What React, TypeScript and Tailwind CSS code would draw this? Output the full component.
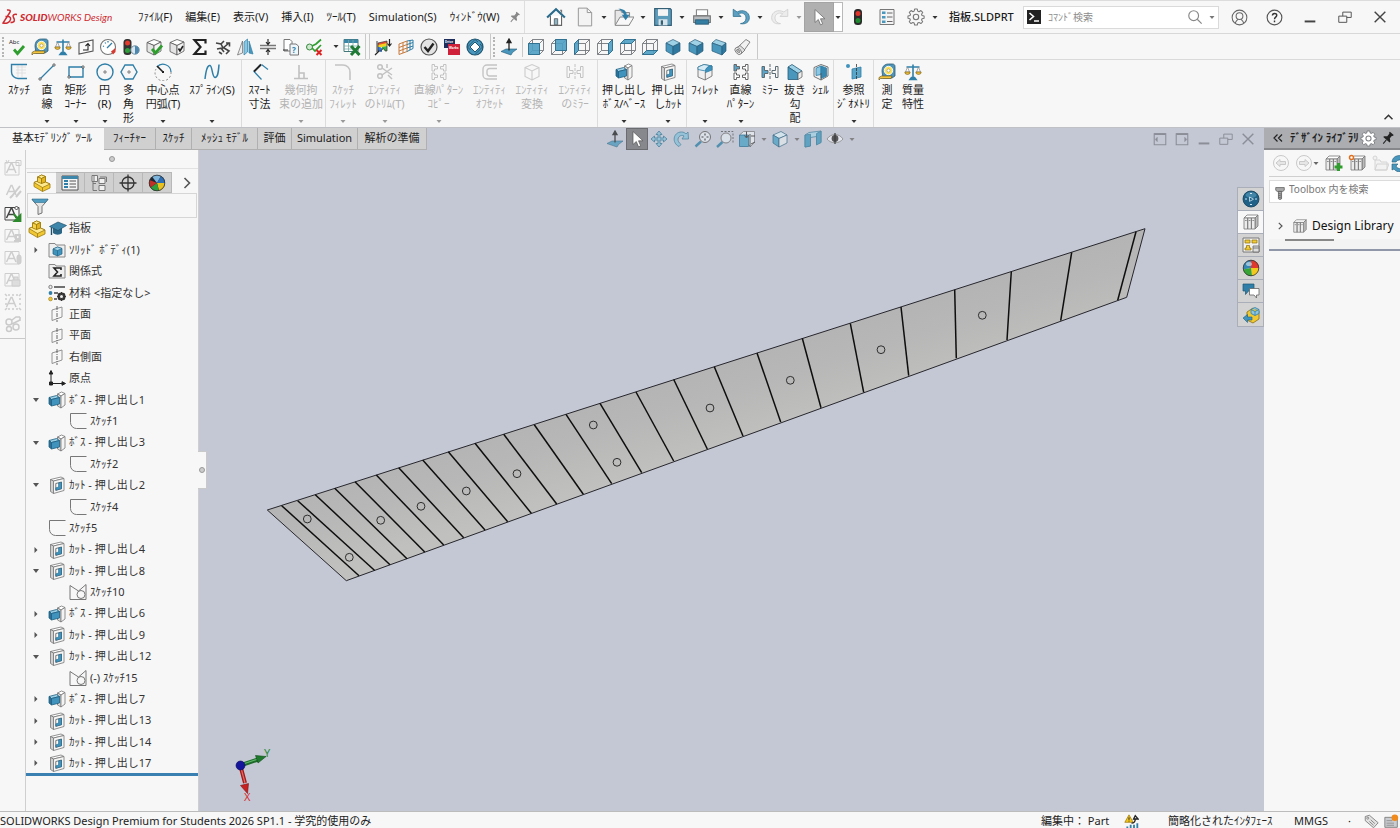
import React from "react";

type IconName = string;

const B = "#2f7fa8";
const K = "#3d3d3d";
const G = "#8a8a8a";

/* Wireframe cube with one face filled, used by the standard view buttons. */
const wireFaces: Record<string, string> = {
  front: "M1.500 5.500h11v11h-11z",
  back: "M5.500 1.500h11v11h-11z",
  left: "M1.500 5.500l4-4v11l-4 4z",
  right: "M12.500 5.500l4-4v11l-4 4z",
  top: "M1.500 5.500l4-4h11l-4 4z",
  bottom: "M1.500 16.500l4-4h11l-4 4z",
};

const Wire = ({ face }: { face: string }) => (
  <>
    <path
      d="M1.500 5.500h11v11h-11zM5.500 1.500h11v11h-11zM1.500 5.500l4-4M12.500 5.500l4-4M12.500 16.500l4-4M1.500 16.500l4-4"
      fill="none"
      stroke="#73777c"
      strokeWidth=".9"
    />
    <path d={wireFaces[face]} fill="#4f9fc4" fillOpacity=".9" stroke="#2a6d90" strokeWidth=".9" />
  </>
);

const Cube = ({ mx = 9, c = ["#9ed0e6", "#4a97bd", "#2f789f"] }: { mx?: number; c?: string[] }) => (
  <g stroke="#2a5d7a" strokeWidth=".7" strokeLinejoin="round">
    <path d={`M2 5L${18 - mx} 1.5L16 5L${mx} 8.5z`} fill={c[0]} />
    <path d={`M2 5L${mx} 8.5V17L2 13z`} fill={c[1]} />
    <path d={`M16 5L${mx} 8.5V17L16 13z`} fill={c[2]} />
  </g>
);

const GreyBox = () => (
  <g stroke="#555" strokeWidth=".8" strokeLinejoin="round">
    <path d="M2 4.500L9 1.500L16 4L9 7.500z" fill="#fff" />
    <path d="M2 4.500L9 7.500V17L2 13.500z" fill="#e4e4e4" />
    <path d="M16 4L9 7.500V17L16 13z" fill="#f4f4f4" />
  </g>
);

const Boss = () => (
  <g strokeLinejoin="round" strokeWidth=".8">
    <path d="M9.500 3L13.500 1l3.500 1.500-4 2.500z" fill="#fff" stroke="#777" />
    <path d="M9.500 3L13 5v12l-3.500-2z" fill="#dcdcdc" stroke="#777" />
    <path d="M13 5l4-2.500v11.500L13 17z" fill="#f3f3f3" stroke="#777" />
    <path d="M1 6.500L8.500 4.500 11.500 6.500 3.500 8.500z" fill="#9bd0e7" stroke="#1f5f80" />
    <path d="M1 6.500l2.500 2V15L1 13z" fill="#2c7298" stroke="#1f5f80" />
    <path d="M3.500 8.500l8-2V13l-8 2z" fill="#3f93bd" stroke="#1f5f80" />
  </g>
);

const Cut = () => (
  <g strokeLinejoin="round" strokeWidth=".8" stroke="#777">
    <path d="M2.500 3.500L13 1l3 1.500L5.500 5z" fill="#fff" />
    <path d="M2.500 3.500l3 1.500v12.500l-3-2z" fill="#d0d0d0" />
    <path d="M5.500 5L16 2.500v12L5.500 17.500z" fill="#f5f5f5" />
    <path d="M7.800 7.500l5.700-1.400v6.600l-5.700 1.600z" fill="#fff" stroke="#555" />
    <path d="M10.500 6.900l3-.8v6.600l-5.700 1.600v-2.500l2.700-.8z" fill="#3f93bd" stroke="#1f5f80" strokeWidth=".5" />
  </g>
);

const Books = ({ x = 0 }: { x?: number }) => (
  <g stroke="#777" strokeWidth=".8" strokeLinejoin="round" transform={`translate(${x} 0)`}>
    <path d="M2 5l3-3h11l-3 3z" fill="#fff" />
    <path d="M13 5l3-3v11l-3 3z" fill="#bbb" />
    <path d="M2 5h3.700v11H2zM5.700 5h3.700v11H5.700zM9.400 5H13v11H9.400z" fill="#ececec" />
    <path d="M3 7.500h1.700M6.700 7.500h1.700M10.400 7.500h1.700" />
  </g>
);

const Tape = () => (
  <g>
    <path d="M4 8.500C4 4 6 1 10.500 1h4c1.500 0 2.500 1 2.500 2.500V13L14 15H5z" fill="#4f93b6" stroke="#2b5e7a" strokeWidth=".8" />
    <circle cx="10.500" cy="7.500" r="4.200" fill="#ffe25a" stroke="#fff" strokeWidth=".9" />
    <circle cx="10.500" cy="7.500" r="1.600" fill="#fff" stroke="#777" strokeWidth=".5" />
    <path d="M14 13H3.500L1 14.500V17l1.500-1.500H13z" fill="#f4c63f" stroke="#6b5a20" strokeWidth=".7" />
  </g>
);

const Scales = () => (
  <g>
    <path d="M9 1.500v13M2.500 4h13M6 16.500h6l-1.500-2h-3z" stroke={B} strokeWidth="1.600" fill={B} />
    <path d="M3.500 4L1.500 9h4zM14.500 4l-2 5h4z" fill="none" stroke={G} strokeWidth=".7" />
    <path d="M.8 9h5.400a2.700 2.500 0 0 1-5.400 0zM11.800 9h5.400a2.700 2.500 0 0 1-5.400 0z" fill="#e6b93a" stroke="#7a5f12" strokeWidth=".6" />
  </g>
);

const Gear = ({ c = "#777", f = "none" }: { c?: string; f?: string }) => (
  <g fill={f} stroke={c} strokeWidth="1.100" strokeLinejoin="round">
    <path d="M7.600 1.500h2.800l.5 2.200 1.300.6 2-1.200 1.900 2-1.200 1.900.5 1.300 2.200.5v2.300l-2.200.6-.5 1.300 1.200 1.900-1.900 1.900-2-1.200-1.300.6-.5 2.200H7.600l-.5-2.200-1.300-.6-2 1.200-1.900-1.900 1.200-1.900-.5-1.300L.6 11.100V8.800l2.200-.5.500-1.300-1.300-1.900 1.900-2 2 1.200 1.200-.6z" transform="translate(.4 -.4) scale(.95)" />
    <circle cx="9" cy="9" r="2.700" />
  </g>
);

const Ball = () => (
  <g>
    <path d="M9 9V1A8 8 0 0 0 1.200 10.500z" fill="#3787b5" />
    <path d="M9 9V1a8 8 0 0 1 8 8z" fill="#e03a2e" />
    <path d="M9 9l8 0a8 8 0 0 1-7 8z" fill="#f3c91d" />
    <path d="M9 9L1.200 10.500A8 8 0 0 0 10 17z" fill="#36a536" />
    <circle cx="9" cy="9" r="7.800" fill="none" stroke="#333" strokeWidth=".8" />
    <ellipse cx="7" cy="5" rx="3" ry="2" fill="#fff" opacity=".5" />
  </g>
);

const DarkBall = () => (
  <g>
    <circle cx="9" cy="9" r="8" fill="#1d2733" />
    <path d="M9 9L4 2.500A8 8 0 0 1 13 2z" fill="#7db4dc" />
    <path d="M9 9l4-7a8 8 0 0 1 4 7z" fill="#2e6fb5" />
    <path d="M9 9h8a8 8 0 0 1-6 7.700z" fill="#e8c020" />
    <path d="M9 9l-6.500 4.500A8 8 0 0 0 11 16.700z" fill="#2f9e3c" />
    <path d="M9 9L2.500 13.500A8 8 0 0 1 1.500 6z" fill="#c03028" />
    <circle cx="9" cy="9" r="7.800" fill="none" stroke="#333" strokeWidth=".8" />
  </g>
);

const Anno = ({ children, c = "#cdcdcd", box = true }: { children?: React.ReactNode; c?: string; box?: boolean }) => (
  <g fill="none" stroke={c} strokeWidth="1">
    {box && <path d="M1 3.500h14v12.500H1z" />}
    <path d="M2.500 14L7 4.500h1L12 14M4.500 10.500h6" strokeWidth="1.500" />
    {children}
  </g>
);

const Pattern = ({ c, f = "none" }: { c: string; f?: string }) => (
  <g fill={f} stroke={c} strokeWidth="1">
    <path d="M2 1.500h2.500v2h3v2.500h-3v2H2z" fill={f === "none" ? "none" : "#5aa5c8"} />
    <path d="M16 1.500h-2.500v2h-3v2.500h3v2H16zM2 10h2.500v2h3v2.500h-3v2H2zM16 10h-2.500v2h-3v2.500h3v2H16z" />
  </g>
);

const MirrorIcon = ({ c, f = "none" }: { c: string; f?: string }) => (
  <g fill="none" stroke={c} strokeWidth="1">
    <path d="M1 3.500h2.500v4H7v3H3.500v4H1z" fill={f} />
    <path d="M17 3.500h-2.500v4H11v3h3.500v4H17z" />
    <path d="M9 1v16" strokeDasharray="3 1" />
  </g>
);

const Sigma = () => <path d="M14.500 5.500V2H3.500L9.500 9l-6 7h11v-3.500" fill="none" stroke="#222" strokeWidth="2.200" />;

const NormalTo = () => (
  <g>
    <path d="M1 13.500l5-2.500h11l-4.500 3.500L11 17z" fill="#4a97bd" stroke="#235b78" strokeWidth=".6" />
    <path d="M9 12.500V3M9 1L7 4.500h4z" stroke="#222" strokeWidth="1.300" fill="#222" />
  </g>
);

const icons: Record<IconName, React.ReactNode> = {
  check: (
    <>
      <text x="1" y="6" fontSize="6" fill="#222">Abc</text>
      <path d="M6 11.500l3.500 4L16 8" fill="none" stroke="#2f9e2f" strokeWidth="2.800" />
    </>
  ),
  tape: <Tape />,
  scales: <Scales />,
  section: (
    <g fill="none" stroke="#555" strokeWidth="1.100">
      <path d="M2 5l14-3v11L2 16z" fill="#fafafa" />
      <path d="M6 12h5V6M8.500 8L11 5.500 13 8" stroke="#222" />
    </g>
  ),
  gauge: (
    <>
      <circle cx="9" cy="9" r="7.500" fill="#fff" stroke="#777" strokeWidth="1.100" />
      <path d="M4 8l1 .5M6 4.500l.7 1M9 3v1.500M13 5l-5 5" stroke={B} strokeWidth="1.300" />
      <path d="M12 13.500l4.500-3.500v4L14 16.500z" fill="#d43a2f" />
    </>
  ),
  lightPlus: (
    <>
      <rect x="1.500" y="1" width="8" height="16" rx="3.500" fill="#333" />
      <circle cx="5.500" cy="5" r="2.500" fill="#e53b2e" />
      <circle cx="5.500" cy="12.500" r="2.500" fill="#2e9e3a" />
      <circle cx="13" cy="12" r="4.200" fill="#d9e6ee" stroke="#6b8ca0" />
      <path d="M13 12V8a4 4 0 0 1 0 8z" fill="#4a86ad" />
    </>
  ),
  boxCheck: (
    <>
      <GreyBox />
      <path d="M7 11l3.500 4L17 7.500" fill="none" stroke="#2f9e2f" strokeWidth="2.800" />
    </>
  ),
  boxMark: (
    <>
      <GreyBox />
      <path d="M10.500 10.500l1.500 2.500 3-5" fill="none" stroke="#222" strokeWidth="1.600" />
    </>
  ),
  sigma: <Sigma />,
  explode: (
    <path d="M2 5l5 1 2 4 6-5M3 11l5-1M7 6l3-3M10 14l-3-4M10 10l5 3-3 3M12 5h3.500v3.500M5 14l3 2" fill="none" stroke="#444" strokeWidth="1.600" />
  ),
  mirrorPlane: (
    <g strokeWidth=".7">
      <path d="M6.500 3v12L1.500 17z" fill="#eee" stroke="#666" />
      <path d="M8 4l3.500-3v13L8 17z" fill="#8cc6e0" stroke={B} />
      <path d="M13 3v12l4 1z" fill="#4a97bd" stroke={B} />
    </g>
  ),
  thickness: (
    <>
      <path d="M1 7.500h16M1 10.500h16" stroke="#777" strokeWidth="1.300" />
      <path d="M9 1v5M9 17v-5M7 4L9 6.500 11 4M7 14l2-2.500 2 2.500" stroke="#222" strokeWidth="1.100" fill="none" />
    </>
  ),
  compare: (
    <>
      <path d="M2 1.500h6l2 2V13H2z" fill="#fff" stroke="#777" />
      <path d="M8 6h6l2.500 2v9H8z" fill="#eef6fa" stroke="#777" />
      <text x="10" y="15" fontSize="8" fontWeight="700" fill={B}>?</text>
      <path d="M1 12h5" stroke="#333" />
    </>
  ),
  symCheck: (
    <>
      <circle cx="4.500" cy="9" r="3" fill="#cfe8cf" stroke="#338a3b" />
      <path d="M7 8l4-2 5-4.500M7 10l3 3 6-6" stroke="#2f9e2f" strokeWidth="1.700" fill="none" />
      <path d="M11.500 12l5 5M16.500 12l-5 5" stroke="#d22" strokeWidth="2" />
    </>
  ),
  excel: (
    <>
      <path d="M1 1.500h14v12H1z" fill="#fff" stroke="#477" />
      <path d="M1 1.500h14V5H1z" fill="#3c87a8" />
      <path d="M1 8h14M1 11h14M5.500 2v11M10 2v11" stroke="#7aa" strokeWidth=".8" />
      <path d="M8 8l8.500 9M16.500 8L8 17" stroke="#1f7a35" strokeWidth="3" />
    </>
  ),
  fea: (
    <>
      <path d="M2 3h2v11H2z" fill="#999" />
      <path d="M4 5l9-2v3L4 8z" fill="#e8502e" />
      <path d="M4 7l9-2v3L4 10z" fill="#f2d21f" />
      <path d="M4 9c2 0 3 0 4 1.500V14l-4-1z" fill="#3578d4" />
      <path d="M8 9l5-1v5h-2l-1-2-2 1z" fill="#37b24d" />
      <path d="M4 5l9-2v10h-2c0-3-3-3-4 0H4z" fill="none" stroke="#333" strokeWidth=".7" />
      <path d="M15.500 1v7M13.500 5.500l2 2.500 2-2.500M5 13l-4 4" stroke="#222" strokeWidth="1.200" fill="none" />
    </>
  ),
  mesh: (
    <g fill="none" strokeWidth="1">
      <path d="M2 6l8-3M2 9.500l8-3M2 13l8-3M2 16.500l8-3M2 6v10.500M6 4.500V15M10 3v10.500" stroke="#c77a3a" />
      <path d="M10 3l6-1M10 6.500l6-2M10 10l6-2M10 13.500l6-3M13 2.500V12M16 2v8.500" stroke={B} />
    </g>
  ),
  tickRound: (
    <>
      <circle cx="9" cy="9" r="8" fill="#e3e3e3" stroke="#555" strokeWidth="1.200" />
      <path d="M4.500 9l3.500 4L13.500 5.500" fill="none" stroke="#222" strokeWidth="2.400" />
    </>
  ),
  drive: (
    <>
      <path d="M1 1h11v9H1z" fill="#1d2d5c" />
      <path d="M5 6h12v11H5z" fill="#d0213a" />
      <text x="2" y="5" fontSize="3" fontWeight="700" fill="#fff">Drive</text>
      <text x="6" y="11" fontSize="3" fontWeight="700" fill="#fff">Works</text>
    </>
  ),
  camworks: (
    <>
      <circle cx="9" cy="9" r="8" fill="#4a97bd" stroke="#1f5570" strokeWidth="1.200" />
      <path d="M9 4l5 5-5 5-5-5z" fill="#fff" stroke="#1f5570" strokeWidth="1" />
      <path d="M1.500 9L9 1.500M9 1.500L12 4M16.500 9L9 16.500M14 6l2.500 3M1.500 9l3 3" stroke="#1f5570" strokeWidth=".9" />
    </>
  ),
  normalTo: <NormalTo />,
  vFront: <Wire face="front" />,
  vBack: <Wire face="back" />,
  vLeft: <Wire face="left" />,
  vRight: <Wire face="right" />,
  vTop: <Wire face="top" />,
  vBottom: <Wire face="bottom" />,
  vIso: <Cube />,
  vTri: <Cube mx={10} />,
  vDi: <Cube mx={12} />,
  tube: (
    <g stroke="#777" strokeWidth=".9" strokeLinejoin="round">
      <path d="M6 8l7-6.500 4 2.500-6 8.500z" fill="#f1f1f1" />
      <path d="M3 10l4-2.500 5 4.500-4 4z" fill="#e0e0e0" />
      <ellipse cx="5.200" cy="13" rx="2.600" ry="4" transform="rotate(-40 5.200 13)" fill="#fff" />
      <ellipse cx="5.200" cy="13" rx="1.200" ry="2" transform="rotate(-40 5.200 13)" fill="#bbb" />
    </g>
  ),
  rSketch: (
    <>
      <path d="M6 4h10M6 7h10M6 10h10M8 2v12M12 2v12" stroke="#dcdcdc" strokeWidth=".8" />
      <path d="M17 1.500H1.500v7.500a6.500 6.500 0 0 0 6.500 6.500h9" fill="none" stroke={B} strokeWidth="1.400" />
    </>
  ),
  rLine: (
    <>
      <path d="M2 16L16 2" stroke={B} strokeWidth="1.300" />
      <path d="M1 15h2v2H1zM15 1h2v2h-2z" fill="#fff" stroke={K} strokeWidth=".7" />
    </>
  ),
  rRect: (
    <>
      <path d="M2 4h14v10H2z" fill="none" stroke={B} strokeWidth="1.400" />
      <path d="M1 13h2v2H1zM15 3h2v2h-2z" fill="#fff" stroke={K} strokeWidth=".7" />
    </>
  ),
  rCircle: (
    <>
      <circle cx="9" cy="9" r="8" fill="none" stroke={B} strokeWidth="1.400" />
      <path d="M8 8h2v2H8z" fill="#fff" stroke={K} strokeWidth=".6" />
    </>
  ),
  rPoly: (
    <>
      <path d="M5 2h8l4 7-4 7H5L1 9z" fill="none" stroke={B} strokeWidth="1.400" />
      <path d="M8 8h2v2H8z" fill="#fff" stroke={K} strokeWidth=".6" />
    </>
  ),
  rArc: (
    <>
      <path d="M3 4a8 8 0 0 1 14 5" fill="none" stroke={B} strokeWidth="1.300" />
      <path d="M17 9A8 8 0 1 1 2 6" fill="none" stroke="#888" strokeWidth="1" strokeDasharray="2 2" />
      <path d="M3 3l6 6" stroke="#222" strokeWidth="1.600" />
      <path d="M8 8h2v2H8z" fill="#222" />
    </>
  ),
  rSpline: <path d="M2 16C3 7 4.500 2 7 2.500s2 12 5 12 3.500-6 4-13" fill="none" stroke={B} strokeWidth="1.500" />,
  rSmart: (
    <>
      <path d="M9.500 2L3 8.500l7.500 8" fill="none" stroke={B} strokeWidth="1.200" />
      <path d="M10 1.500L3 8.500" stroke="#222" strokeWidth="1.900" />
      <path d="M10.500 1.500l6.500 5" stroke={B} strokeWidth="1.200" />
    </>
  ),
  rPerp: <path d="M2 15.500h14M7 2v13.500M7 10h5v5.500" fill="none" stroke="#c0c0c0" strokeWidth="1.600" />,
  rFilletS: <path d="M1 2h8a7 7 0 0 1 7 7v8" fill="none" stroke="#c4c4c4" strokeWidth="1.600" />,
  rTrim: (
    <g fill="none" stroke="#c2c2c2" strokeWidth="1.500">
      <circle cx="4" cy="4" r="2.300" />
      <circle cx="4" cy="13" r="2.300" />
      <path d="M6 5l10 7M6 12l10-7M11 1v4M12 12l4 4" />
    </g>
  ),
  rPatG: <Pattern c="#c2c2c2" />,
  rOffset: (
    <path d="M16 2H6a4 4 0 0 0-4 4v6a4 4 0 0 0 4 4h10M16 5.500H8.500A2.500 2.500 0 0 0 6 8v2.500A2.500 2.500 0 0 0 8.500 13H16" fill="none" stroke="#c4c4c4" strokeWidth="1.400" />
  ),
  rConvert: <path d="M2 4.500L9 1.500L16 4.500v9L9 17l-7-3.500zM2 4.500L9 8l7-3.500M9 8v9" fill="none" stroke="#cccccc" strokeWidth="1.100" />,
  rMirG: <MirrorIcon c="#c2c2c2" />,
  boss: <Boss />,
  cut: <Cut />,
  rFillet: (
    <g stroke="#666" strokeWidth=".8" strokeLinejoin="round">
      <path d="M2 4L8 1.500l8 1.500v10L9 17l-7-3z" fill="#f0f0f0" />
      <path d="M2 4L8 1.500l8 1.500c-4 0-6 2-6.500 5L2 6.500z" fill="#d8ebf4" stroke={B} />
      <path d="M9.500 8.500c0-3.500 2.500-5.500 6.500-5.500v4L9.500 9.500z" fill="#3f93bd" stroke={B} />
      <path d="M9.300 9v8" />
    </g>
  ),
  rPattern: <Pattern c="#666" f="#fff" />,
  rMirror: <MirrorIcon c="#5b6a73" f="#5aa5c8" />,
  rDraft: (
    <g stroke="#235b78" strokeWidth=".8" strokeLinejoin="round">
      <path d="M2 4l4-2.500L16 8l-4 2.500z" fill="#9ed0e6" />
      <path d="M2 4l10 6.500V16.500H2z" fill="#4a97bd" />
      <path d="M12 10.500L16 8v6l-4 2.500z" fill="#ececec" stroke="#666" />
    </g>
  ),
  rShell: (
    <g strokeWidth=".8" strokeLinejoin="round">
      <path d="M2 4.500L9 1.500 16 4v9l-7 4-7-3.500z" fill="#f0f0f0" stroke="#555" />
      <path d="M4 5.200L9 3v8.500L4 12.500z" fill="#8cc6e0" stroke={B} />
      <path d="M9 3l5.500 2v8L9 15.500z" fill="#3787b0" stroke={B} />
      <path d="M9 10v7" stroke="#555" fill="none" />
    </g>
  ),
  rRef: (
    <>
      <path d="M7 6l9-2v10l-9 2z" fill="#5aa5c8" stroke={B} strokeWidth=".8" />
      <path d="M11.500 1v16" stroke="#333" strokeWidth=".8" strokeDasharray="3 1" />
      <circle cx="3" cy="3" r="2" fill="#3f93bd" />
    </>
  ),
  home: (
    <>
      <path d="M4 8v8.500h10V8" fill="#fff" stroke="#666" />
      <path d="M7.500 16V10.500h3V16z" fill="#8ab6cc" stroke="#555" strokeWidth=".7" />
      <path d="M1 9.500L9 2l8 7.500" fill="none" stroke="#2a6b8c" strokeWidth="1.900" />
      <path d="M12.500 2.500h2v4z" fill="#777" />
    </>
  ),
  newDoc: <path d="M3 1h8l4 4v12H3zM11 1v4h4" fill="#f3f3f3" stroke="#999" strokeWidth=".9" />,
  open: (
    <>
      <path d="M1 3h5l1 2h7v11H1z" fill="#e6e6e6" stroke="#888" strokeWidth=".9" />
      <path d="M5.500 9H18l-4.500 7.500H1z" fill="#f8f8f8" stroke="#888" strokeWidth=".9" />
      <path d="M4 1.500c5 0 7 2 7.500 5.500h2.500L10.500 12 7 7h2c-.5-2-2-3.500-5-5.500z" fill="#2f7fa8" />
    </>
  ),
  save: (
    <>
      <path d="M1.500 1.500h14l1 1v14h-15z" fill="#5c9bba" stroke="#355f75" />
      <path d="M4.500 2h9v6h-9z" fill="#f4f4f4" />
      <path d="M5 11h8v5.500H5z" fill="#d7e3ea" />
      <path d="M7 12h2v4H7z" fill="#355f75" />
    </>
  ),
  print: (
    <>
      <path d="M4 2.500h10V8H4z" fill="#fff" stroke="#888" />
      <path d="M1.500 8h15v6h-15z" fill="#b9bdc0" stroke="#777" />
      <path d="M3 11.500h12v4H3z" fill="#347ea3" stroke="#24566f" strokeWidth=".7" />
    </>
  ),
  undo: <path d="M2 2v6.500h7L6.500 6c4-1.500 7 .5 7 4 0 3-2 4.500-5 5 5 .8 8-1.500 8-5.500 0-5-5.500-8-11-5z" fill="#5ba0c2" stroke="#2c6d8c" strokeWidth=".7" />,
  redo: <path d="M16 2v6.500H9L11.500 6c-4-1.500-7 .5-7 4 0 3 2 4.500 5 5-5 .8-8-1.500-8-5.500 0-5 5.500-8 11-5z" fill="#ececec" stroke="#cdcdcd" strokeWidth=".7" />,
  arrow: <path d="M5 1.500v13l3.300-3 2.200 5.300 2.200-1-2.200-5H15z" fill="#fff" stroke="#777" strokeWidth=".9" />,
  light: (
    <>
      <rect x="5" y="1" width="8" height="16" rx="3.500" fill="#2b2b2b" />
      <circle cx="9" cy="5.500" r="2.500" fill="#e0342a" />
      <circle cx="9" cy="12.500" r="2.500" fill="#1f8b31" />
    </>
  ),
  list: (
    <>
      <path d="M2 1.500h14v15H2z" fill="#f3f3f3" stroke="#777" />
      <path d="M4 3.500h3.500V6H4zM4 8h3.500v2.500H4zM4 12.500h3.500V15H4z" fill="#4a97bd" />
      <path d="M9 5h5.500M9 9h5.500M9 13.500h5.500" stroke="#666" />
    </>
  ),
  gear: <Gear />,
  gearWhite: <Gear c="#7c7e82" f="#fff" />,
  pin: (
    <g transform="rotate(40 9 9)">
      <path d="M6 1h6v1.500l-1 .5v4l3 2.500V11H4V9.500L7 7V3l-1-.5z" fill="currentColor" />
      <path d="M9 11v6" stroke="currentColor" strokeWidth="1.300" />
    </g>
  ),
  search: (
    <g fill="none" stroke="#888" strokeWidth="1.300">
      <circle cx="7.500" cy="7.500" r="5.500" />
      <path d="M11.500 11.500l5 5" />
    </g>
  ),
  user: (
    <g fill="none" stroke="#666" strokeWidth="1.100">
      <circle cx="9" cy="9" r="7.800" />
      <circle cx="9" cy="7.500" r="3.600" />
      <path d="M4.500 15c.5-2 1.500-3 2.800-4M13.500 15c-.5-2-1.500-3-2.800-4" />
    </g>
  ),
  help: (
    <>
      <circle cx="9" cy="9" r="7.800" fill="none" stroke="#555" strokeWidth="1.200" />
      <path d="M6.800 7c0-3 4.600-3 4.600-.3C11.400 8.600 9 8.600 9 10.800M9 12.300v1.600" fill="none" stroke="#333" strokeWidth="1.500" />
    </>
  ),
  min: <path d="M3 14h12" stroke="currentColor" strokeWidth="2.200" />,
  restore: <path d="M2 8h9v7H2zM6.500 8V3.500h9.500v6h-5" fill="none" stroke="currentColor" strokeWidth="1.100" />,
  close: <path d="M3 3l12 12M15 3L3 15" stroke="currentColor" strokeWidth="1.600" />,
  paneL: (
    <g stroke="currentColor" strokeWidth="1.200" fill="none">
      <path d="M2.500 3h13v12.500h-13z" />
      <path d="M2.500 3.500h13" strokeWidth="2" />
      <path d="M6 7v5L3.500 9.500z" fill="currentColor" strokeWidth=".5" />
    </g>
  ),
  paneR: (
    <g stroke="currentColor" strokeWidth="1.200" fill="none">
      <path d="M2.500 3h13v12.500h-13z" />
      <path d="M2.500 3.500h13" strokeWidth="2" />
      <path d="M12 7v5l2.500-2.500z" fill="currentColor" strokeWidth=".5" />
    </g>
  ),
  cursorDark: <path d="M5 1.500v13l3.300-3 2.200 5.300 2.200-1-2.200-5H15z" fill="#fff" stroke="#555" strokeWidth=".7" />,
  pan: (
    <g fill="#8fc1d8" stroke="#3f7d9b" strokeWidth=".9">
      <path d="M9 1L6 4.500h2V8H4.500V6L1 9l3.500 3v-2H8v3.500H6L9 17l3-3.500h-2V10h3.500v2L17 9l-3.500-3v2H10V4.500h2z" />
    </g>
  ),
  rotate: <path d="M7 16.500C-.5 13 1 2 9.500 2c2 0 3.500.8 4.500 2l2-2 .5 7H10l2-3C8 3.500 2.500 9.500 9 14.500z" fill="#8fc1d8" stroke="#3f7d9b" strokeWidth=".8" />,
  zoomFit: (
    <g fill="none">
      <path d="M1.500 16.500L7 11.500" stroke="#3f87aa" strokeWidth="2.400" />
      <circle cx="11" cy="7" r="5.500" fill="#dfe5ec" stroke="#666" />
      <path d="M11 3.500v2M11 8.500v2M7.500 7h2M12.500 7h2" stroke="#333" strokeWidth="1.100" />
    </g>
  ),
  zoomArea: (
    <g fill="none">
      <path d="M5 1.500h12v11" stroke="#666" strokeDasharray="2 1.500" />
      <path d="M1 17l5.500-5" stroke="#3f87aa" strokeWidth="2.400" />
      <circle cx="10" cy="8" r="5" fill="#dfe5ec" stroke="#777" />
    </g>
  ),
  viewSel: (
    <>
      <path d="M1.500 5l4-3.500h11v11l-4 4z" fill="#e4e8ee" stroke="#777" strokeWidth=".8" />
      <path d="M1.500 5h9v11.500h-9z" fill="#5aa5c8" stroke="#2a6d90" strokeWidth=".8" />
      <path d="M8.500 1.500v6M6.500 5.500l2 2.500 2-2.500M17 6h-4M17 12l-4 2M12 4v13" fill="none" stroke="#444" strokeWidth="1" />
    </>
  ),
  style: <Cube mx={8} c={["#d5e8f0", "#5aa5c8", "#dfe3e8"]} />,
  sectionView: (
    <g stroke="#3f7d9b" strokeWidth=".8" strokeLinejoin="round">
      <path d="M1 5l4-2.500L17 1v11.500L12.500 14V6.500l-6 1V16L1 17z" fill="#a9d2e4" />
      <path d="M1 5l5.500-.8V16L1 17zM12.500 3.500L17 1v11.500L12.500 15z" fill="#4f9cc0" />
    </g>
  ),
  eye: (
    <g>
      <path d="M1 9c4-6 12-6 16 0-4 5-12 5-16 0z" fill="#e8eaf0" stroke="#888" strokeWidth=".9" />
      <circle cx="9" cy="8.500" r="3.400" fill="#444" />
      <path d="M9 3v11" stroke="#222" strokeWidth="1.200" />
    </g>
  ),
  an1: <Anno><path d="M2 1l1 2M5 1L4 3M1 4h3M12 1.500h5v5h-5z" /></Anno>,
  an2: <Anno box={false}><path d="M16 5L8 15l-2 2M17 10l-5 6" strokeWidth="2" /></Anno>,
  an3: <Anno c="#444"><path d="M12.500 2l2 2-2 2-2-2z" fill="#f7f7f7" /><path d="M9.500 10l6 6M16.500 11v6h-6z" stroke="#2c8a2c" fill="#2c8a2c" strokeWidth="1.800" /></Anno>,
  an4: <Anno><path d="M12 9h4v4h-4zM10 15h7" strokeWidth="2" /></Anno>,
  an5: <Anno><rect x="13" y="7" width="4" height="9" rx="2" fill="#d0d0d0" /></Anno>,
  an6: <Anno><path d="M8 10h8v6H8zM10 10V7h4v3" fill="#ddd" /></Anno>,
  an7: <Anno box={false}><path d="M1 1l2 2M17 1l-2 2M1 17l2-2M17 17l-2-2M5 1v2M9 1v2M13 1v2M5 15v2M9 15v2M13 15v2M1 6h2M1 11h2M15 6h2M15 11h2" strokeWidth="1.500" /></Anno>,
  an8: (
    <g fill="none" stroke="#cacaca" strokeWidth="1.500">
      <circle cx="5" cy="7" r="3" />
      <circle cx="12" cy="12" r="3" />
      <circle cx="5" cy="14" r="2.500" />
      <path d="M8 5l4-3h4M16 2v4M8 9l8-4" />
    </g>
  ),
  part: (
    <g stroke="#9a7a10" strokeWidth=".8" strokeLinejoin="round">
      <path d="M4.500 3L8.500 1l4 1.500V8l4.500 2v4l-7.500 3.500L1 12.500V8.500L4.500 7z" fill="#f2c832" />
      <path d="M4.500 3L8.500 1l4 1.500-4 2z" fill="#ffe98f" />
      <path d="M1 8.500L4.500 7l4 2 4-1 4.500 2-7.500 3.500z" fill="#ffe98f" />
      <path d="M4.500 3l4 1.500v5L4.500 8z" fill="#f6d24a" />
      <path d="M8.500 4.500l4-2V8l-4 1.500z" fill="#e3b41f" />
      <path d="M9.500 13.500v4" />
    </g>
  ),
  prop: (
    <>
      <path d="M1 2h16v14H1z" fill="#f5f5f5" stroke="#555" />
      <path d="M1 2h16v3H1z" fill="#3f87aa" />
      <path d="M3 7h4M3 10h4M3 13h4" stroke="#2f7fa8" strokeWidth="1.800" />
      <path d="M8.500 7H15M8.500 10H15M8.500 13H15" stroke="#555" />
    </>
  ),
  config: (
    <g fill="#f1f1f1" stroke="#777" strokeWidth="1">
      <path d="M3 7v9.500h4M3 9.500h3" fill="none" />
      <path d="M2 1.500h5.500v6H2zM4 1.500v6M9 4.500h6v5H9zM9 11.500h6v5H9z" />
      <path d="M10 3h6.500v5" fill="none" />
    </g>
  ),
  target: (
    <g fill="none" stroke="#333" strokeWidth="1.300">
      <circle cx="9" cy="9" r="6" />
      <path d="M9 .5v17M.5 9h17" />
    </g>
  ),
  ball: <Ball />,
  darkBall: <DarkBall />,
  funnel: (
    <>
      <path d="M1 2.500h16L11 9.500V16l-4 1.500v-8z" fill="#e5e5e5" stroke="#666" strokeWidth=".9" />
      <path d="M1 2h16L14.500 5.500h-11z" fill="#4f9cc0" stroke="#2c6d8c" strokeWidth=".6" />
    </>
  ),
  cap: (
    <>
      <path d="M4 8v5c3 2.500 7 2 9 0V8z" fill="#2d6787" />
      <path d="M.5 6.500L9 2l8.500 3.500L9 10.500z" fill="#3f87aa" stroke="#1e4f69" strokeWidth=".7" />
      <path d="M2.500 7.500v7.500" stroke="#1e4f69" strokeWidth="1.400" />
    </>
  ),
  bodyFolder: (
    <>
      <path d="M1 2.500h6l1 1.500h9v12H1z" fill="#eee" stroke="#888" />
      <path d="M5 8L9.500 6 14 7.500v5.500l-4.500 2-4.500-2z" fill="#3f93bd" stroke="#1f5f80" strokeWidth=".7" />
      <path d="M5 8l4.500-2L14 7.500l-4.500 2z" fill="#a5d5e9" stroke="#1f5f80" strokeWidth=".6" />
      <path d="M9.500 9.500V15" stroke="#1f5f80" strokeWidth=".6" fill="none" />
    </>
  ),
  eqFolder: (
    <>
      <path d="M1 2.500h6l1 1.500h9v12H1z" fill="#eee" stroke="#888" />
      <path d="M13 8V6H6l3.500 4L6 14h7v-2" fill="none" stroke="#222" strokeWidth="1.600" />
    </>
  ),
  material: (
    <>
      <circle cx="2.500" cy="3" r="1.700" fill="#eee" stroke="#666" strokeWidth=".8" />
      <circle cx="2.500" cy="9" r="1.900" fill="#2f7fa8" />
      <circle cx="2.500" cy="15" r="1.900" fill="#f0c530" stroke="#86701a" strokeWidth=".5" />
      <path d="M6 3h11M6 9h4M6 15h3" stroke="#444" strokeWidth="1.600" />
      <circle cx="13.500" cy="12.500" r="3" fill="none" stroke="#333" strokeWidth="2.200" />
      <path d="M13.500 8v9M9 12.500h9M10.500 9.500l6 6M16.500 9.500l-6 6" stroke="#333" strokeWidth="1.100" />
      <circle cx="13.500" cy="12.500" r="1.500" fill="#eee" />
    </>
  ),
  plane: (
    <g fill="none" stroke="#888" strokeWidth=".9">
      <path d="M4 5l10-3v10L4 15.500z" />
      <path d="M9 1v16" stroke="#555" strokeDasharray="4 1 1 1" />
    </g>
  ),
  origin: <path d="M3 14.500V3M1.200 5L3 1.500 4.800 5zM3 14.500h12M14 12.700l3.500 1.800L14 16.300zM1.500 13h3v3h-3z" fill="#222" stroke="#222" strokeWidth="1" />,
  sketch: <path d="M17.500 1.500h-16v9a6 6 0 0 0 6 6h10" fill="none" stroke="#777" strokeWidth="1" />,
  sketchC: (
    <g fill="none" stroke="#777" strokeWidth="1">
      <path d="M1 2.500v14h16V1.500L9.500 8z" />
      <circle cx="12" cy="11.500" r="4" />
    </g>
  ),
  compass: (
    <>
      <circle cx="9" cy="9" r="8" fill="#1f6187" stroke="#123d57" strokeWidth=".8" />
      <ellipse cx="9" cy="5" rx="5.500" ry="3" fill="#5b9cbd" opacity=".6" />
      <path d="M7.500 7l4 2.200-4 2.200z" fill="none" stroke="#cfe6f1" strokeWidth=".8" />
      <path d="M3 9h2M13 9h2M8 3.500h2M8 14.500h2" stroke="#cfe6f1" strokeWidth="1.200" />
    </>
  ),
  books: <Books />,
  palette: (
    <>
      <path d="M1 2h16v14H1z" fill="#f1f1f1" stroke="#777" />
      <path d="M3 4h5v3H3zM10 4h5v3h-5z" fill="#f3cb35" stroke="#8a6d10" strokeWidth=".7" />
      <path d="M3 14h6v-2H7.500v-2.500h-3V12H3z" fill="#f3cb35" stroke="#8a6d10" strokeWidth=".7" />
      <path d="M11 10h6v6h-6zM11 12h6" fill="#ddd" stroke="#666" strokeWidth=".8" />
    </>
  ),
  chat: (
    <>
      <path d="M1 2h11v7H6.500l-3 3.500V9H1z" fill="#2f7fa8" stroke="#1e5874" strokeWidth=".7" />
      <path d="M7.500 6.500H17V13h-2.500v3L12 13H7.500z" fill="#fff" stroke="#666" strokeWidth=".8" />
    </>
  ),
  importer: (
    <>
      <path d="M5 6l6-4 6 3v8l-6 4-6-3z" fill="#f0c830" stroke="#8a6d10" strokeWidth=".8" />
      <path d="M9 3.500l4-2 4 2v4l-4 2-4-2zM9 3.500l4 2 4-2M13 5.500v4" fill="#8cc6e0" stroke={B} strokeWidth=".8" />
      <path d="M1 12l4.500-3.500V11H10v3H5.500v2.500z" fill="#3f93bd" stroke="#1f5f80" strokeWidth=".6" />
    </>
  ),
  back: (
    <g fill="#e6e6e6" stroke="#c9c9c9">
      <circle cx="9" cy="9" r="7.500" fill="#f7f7f7" />
      <path d="M4 9l4-3.500v2h5.500v3H8v2z" />
    </g>
  ),
  fwd: (
    <g fill="#e6e6e6" stroke="#c9c9c9">
      <circle cx="9" cy="9" r="7.500" fill="#f7f7f7" />
      <path d="M14 9l-4-3.500v2H4.500v3H10v2z" />
    </g>
  ),
  booksAdd: (
    <>
      <Books x={-1} />
      <path d="M13.500 9v8M9.500 13h8" stroke="#2f9e2f" strokeWidth="3" />
    </>
  ),
  booksNew: (
    <>
      <Books x={1} />
      <circle cx="3.500" cy="3.500" r="2" fill="#fff" stroke="#e07020" strokeWidth="1.500" />
    </>
  ),
  folderNew: (
    <g fill="#f2f2f2" stroke="#d4d4d4">
      <path d="M4 6h5l1 2h6v8H4zM6 10h12l-2.500 6H4z" />
      <circle cx="4" cy="4" r="2" />
    </g>
  ),
  refresh: <path d="M2 8a7 7 0 0 1 13-3l2-1v6h-6l2-2a4 4 0 0 0-7 0zM2 10h6l-2 2a4 4 0 0 0 7 1l3 1a7 7 0 0 1-12 1l-2 1z" fill="#4a97bd" stroke="#235b78" strokeWidth=".6" />,
  bolt: (
    <g fill="#aaa" stroke="#555" strokeWidth=".9">
      <path d="M3.500 2h11v3.500l-2 1.500h-7l-2-1.500z" />
      <path d="M7 7h4v9.500L9 17.500 7 16.500zM7 9.500l4 1M7 12l4 1M7 14.500l4 1" />
    </g>
  ),
  alert: (
    <>
      <path d="M6 1L1 10h10z" fill="#f5c61b" stroke="#946f00" strokeWidth=".8" />
      <path d="M6 4v3M6 8v1" stroke="#222" strokeWidth="1.200" />
      <path d="M4 17v-2M8 17v-4M12 17v-4M16 17v-6" stroke="#2f7fa8" strokeWidth="2.200" />
      <path d="M9 11c3 0 4.500-2 4.500-5M11.500 6l2-4L17 6z" stroke="#222" strokeWidth="1.600" fill="none" />
    </>
  ),
  tag: (
    <g fill="#e3e3e3" stroke="#777">
      <path d="M1.500 3l5-1.500 10.500 9-5.500 6L1.500 8z" />
      <circle cx="4.500" cy="5" r="1.200" fill="#fff" />
      <path d="M8 7l5 4.500M6.500 9l5 4.500" />
    </g>
  ),
  notice: (
    <>
      <path d="M1 4h15v12H1z" fill="#c9ccd0" stroke="#777" />
      <path d="M3 8h7M3 11h9M3 13.500h9" stroke="#888" />
      <circle cx="13" cy="4.500" r="4" fill="#f08a1c" />
    </>
  ),
};

const Icon = ({ n, className = "size-[18px]" }: { n: IconName; className?: string }) => (
  <svg viewBox="0 0 18 18" className={`${className} shrink-0`} aria-hidden="true">
    {icons[n]}
  </svg>
);

const Caret = ({ className = "text-[#333]" }: { className?: string }) => (
  <svg viewBox="0 0 6 3" className={`h-[3px] w-[6px] shrink-0 ${className}`} aria-hidden="true">
    <path d="M.5 0h5L3 3z" fill="currentColor" />
  </svg>
);

const IconButton = ({ n, label, className = "", icon }: { n: IconName; label: string; className?: string; icon?: string }) => (
  <button type="button" aria-label={label} className={`flex shrink-0 items-center justify-center ${className}`}>
    <Icon n={n} className={icon} />
  </button>
);

const menus = ["ﾌｧｲﾙ(F)", "編集(E)", "表示(V)", "挿入(I)", "ﾂｰﾙ(T)", "Simulation(S)", "ｳｨﾝﾄﾞｳ(W)"];

const TitleBar = () => (
  <header className="flex h-[34px] shrink-0 items-center border-y border-t-[#dcdcdc] border-b-[#d8d8d8] bg-[#f7f7f7]">
    <div className="flex w-[135px] shrink-0 items-center gap-[2px] pl-[2px] text-[#cf2a30]">
      <svg viewBox="0 0 16 16" className="size-[16px]" aria-hidden="true">
        <g fill="none" stroke="currentColor" strokeWidth="1.500">
          <path d="M5 1c3-.5 4 1 2.500 3L1 14c3 1 7-.5 7.500-3.500C9 8 7 7 3.500 7.500" />
          <path d="M15 5.500c-3-.5-5 .5-3.500 3s1.500 5-3 5" />
        </g>
      </svg>
      <p className="whitespace-nowrap font-[Lato] text-[10px] italic leading-none">
        <b className="font-black">SOLID</b>WORKS Design
      </p>
    </div>
    <nav className="flex h-full w-[390px] shrink-0 items-center gap-[13px] border-r border-[#dedede] pl-[3px]">
      {menus.map((m) => (
        <button type="button" key={m} className="whitespace-nowrap">
          {m}
        </button>
      ))}
      <IconButton n="pin" label="メニューを固定" className="-ml-[5px] text-[#888]" icon="size-[13px]" />
    </nav>
    <div className="flex h-full shrink-0 items-center">
      <IconButton n="home" label="ホーム" className="ml-[21px] mr-[9px]" icon="size-[20px]" />
      {[
        ["newDoc", "新規"],
        ["open", "開く"],
        ["save", "保存"],
        ["print", "印刷"],
        ["undo", "取り消し"],
      ].map(([n, label]) => (
        <button type="button" key={n} aria-label={label} className="flex w-[39px] items-center gap-[6px]">
          <Icon n={n} className="size-[20px]" />
          <Caret />
        </button>
      ))}
      <button type="button" aria-label="やり直し" className="flex w-[34px] items-center gap-[6px]">
        <Icon n="redo" className="size-[20px]" />
        <Caret className="text-[#999]" />
      </button>
      <IconButton n="arrow" label="選択" className="h-[30px] w-[30px] border border-[#a4a4a4] bg-[#b0b0b0]" icon="size-[18px]" />
      <button type="button" aria-label="選択オプション" className="flex h-[30px] w-[9px] items-center justify-center border border-l-0 border-[#b9b9b9] bg-white">
        <Caret />
      </button>
      <IconButton n="light" label="再構築" className="w-[29px]" />
      <IconButton n="list" label="ファイル プロパティ" className="w-[29px]" />
      <IconButton n="gear" label="オプション" className="w-[29px]" />
      <button type="button" aria-label="オプション メニュー" className="flex w-[10px] justify-center">
        <Caret />
      </button>
      <h1 className="ml-[9px] whitespace-nowrap font-medium">指板.SLDPRT</h1>
    </div>
    <div className="ml-auto flex h-full shrink-0 items-center pr-[3px]">
      <label className="mr-[3px] flex h-[23px] w-[196px] items-center border border-[#dadada] bg-white pl-[3px]">
        <svg viewBox="0 0 14 14" className="size-[14px] shrink-0" aria-hidden="true">
          <path d="M0 0h14v14H0z" fill="#222" />
          <path d="M2.500 3l4 3.500-4 3.500M7 11h5" fill="none" stroke="#fff" strokeWidth="1.600" />
        </svg>
        <input aria-label="コマンド検索" placeholder="ｺﾏﾝﾄﾞ検索" className="ml-[7px] min-w-0 flex-1 bg-transparent text-[10px] outline-none placeholder:text-[#8c8c8c]" />
        <Icon n="search" className="size-[16px]" />
        <Caret className="ml-[6px] mr-[3px] text-[#777]" />
      </label>
      <IconButton n="user" label="ログイン" className="w-[35px]" icon="size-[17px]" />
      <IconButton n="help" label="ヘルプ" className="w-[35px]" icon="size-[17px]" />
      <IconButton n="min" label="最小化" className="w-[35px] text-[#444]" icon="size-[16px]" />
      <IconButton n="restore" label="元に戻す" className="w-[35px] text-[#555]" icon="size-[16px]" />
      <IconButton n="close" label="閉じる" className="w-[35px] text-[#444]" icon="size-[16px]" />
    </div>
  </header>
);

const Grip = () => <span className="h-[20px] w-[3px] shrink-0 border-l-2 border-dotted border-[#b5b5b5]" />;

const toolGroupA = ["check", "tape", "scales", "section", "gauge", "lightPlus", "boxCheck", "boxMark", "sigma", "explode", "mirrorPlane", "thickness", "compare", "symCheck"];
const toolGroupB = ["fea", "mesh", "tickRound", "drive", "camworks"];
const toolGroupC = ["vFront", "vBack", "vLeft", "vRight", "vTop", "vBottom", "vIso", "vTri", "vDi", "tube"];

const ToolBar = () => (
  <div className="flex h-[26px] shrink-0 items-center border-b border-[#dadada] bg-[#f7f7f7] pl-[2px]">
    <Grip />
    <div className="ml-[3px] flex w-[315px] shrink-0 items-center justify-between">
      {toolGroupA.map((n) => (
        <IconButton key={n} n={n} label={n} />
      ))}
    </div>
    <button type="button" aria-label="その他" className="ml-[10px] flex w-[6px]">
      <Caret />
    </button>
    <IconButton n="excel" label="設計テーブル" className="ml-[4px]" />
    <span className="ml-[4px] h-full w-px shrink-0 bg-[#c9c9c9]" />
    <span className="ml-[3px] h-full w-px shrink-0 bg-[#c9c9c9]" />
    <div className="ml-[4px] flex w-[110px] shrink-0 items-center justify-between">
      {toolGroupB.map((n) => (
        <IconButton key={n} n={n} label={n} />
      ))}
    </div>
    <span className="ml-[6px] mr-[2px] h-full w-px shrink-0 bg-[#c9c9c9]" />
    <Grip />
    <IconButton n="normalTo" label="選択アイテムに垂直" className="ml-[4px]" />
    <span className="mx-[4px] h-[20px] w-px shrink-0 bg-[#c9c9c9]" />
    <div className="flex w-[224px] shrink-0 items-center justify-between">
      {toolGroupC.map((n) => (
        <IconButton key={n} n={n} label={n} />
      ))}
    </div>
    <span className="ml-[6px] h-full w-px shrink-0 bg-[#c9c9c9]" />
  </div>
);

type Cmd = { n: IconName; w: string; t: string[]; arrow?: boolean; off?: boolean };

const ribbon: Cmd[][] = [
  [
    { n: "rSketch", w: "w-[38px]", t: ["ｽｹｯﾁ"] },
    { n: "rLine", w: "w-[18px]", t: ["直", "線"], arrow: true },
    { n: "rRect", w: "w-[39px]", t: ["矩形", "ｺｰﾅｰ"], arrow: true },
    { n: "rCircle", w: "w-[19px]", t: ["円", "(R)"], arrow: true },
    { n: "rPoly", w: "w-[29px]", t: ["多", "角", "形"] },
    { n: "rArc", w: "w-[40px]", t: ["中心点", "円弧(T)"], arrow: true },
    { n: "rSpline", w: "w-[58px]", t: ["ｽﾌﾟﾗｲﾝ(S)"], arrow: true },
  ],
  [
    { n: "rSmart", w: "w-[35px]", t: ["ｽﾏｰﾄ", "寸法"] },
    { n: "rPerp", w: "w-[48px]", t: ["幾何拘", "束の追加"], arrow: true, off: true },
  ],
  [
    { n: "rFilletS", w: "w-[34px]", t: ["ｽｹｯﾁ", "ﾌｨﾚｯﾄ"], arrow: true, off: true },
    { n: "rTrim", w: "w-[49px]", t: ["ｴﾝﾃｨﾃｨ", "のﾄﾘﾑ(T)"], arrow: true, off: true },
    { n: "rPatG", w: "w-[59px]", t: ["直線ﾊﾟﾀｰﾝ", "ｺﾋﾟｰ"], arrow: true, off: true },
    { n: "rOffset", w: "w-[43px]", t: ["ｴﾝﾃｨﾃｨ", "ｵﾌｾｯﾄ"], off: true },
    { n: "rConvert", w: "w-[42px]", t: ["ｴﾝﾃｨﾃｨ", "変換"], off: true },
    { n: "rMirG", w: "w-[44px]", t: ["ｴﾝﾃｨﾃｨ", "のﾐﾗｰ"], off: true },
  ],
  [
    { n: "boss", w: "w-[52px]", t: ["押し出し", "ﾎﾞｽ/ﾍﾞｰｽ"], arrow: true },
    { n: "cut", w: "w-[36px]", t: ["押し出", "しｶｯﾄ"], arrow: true },
  ],
  [
    { n: "rFillet", w: "w-[36px]", t: ["ﾌｨﾚｯﾄ"], arrow: true },
    { n: "rPattern", w: "w-[35px]", t: ["直線", "ﾊﾟﾀｰﾝ"], arrow: true },
    { n: "rMirror", w: "w-[24px]", t: ["ﾐﾗｰ"] },
    { n: "rDraft", w: "w-[26px]", t: ["抜き", "勾", "配"] },
    { n: "rShell", w: "w-[25px]", t: ["ｼｪﾙ"] },
  ],
  [{ n: "rRef", w: "w-[39px]", t: ["参照", "ｼﾞｵﾒﾄﾘ"], arrow: true }],
  [
    { n: "tape", w: "w-[26px]", t: ["測", "定"] },
    { n: "scales", w: "w-[26px]", t: ["質量", "特性"] },
  ],
];

const Ribbon = () => (
  <div className="flex h-[68px] shrink-0 border-b border-[#bfc1c6] bg-[#f7f7f7]">
    {ribbon.map((group, i) => (
      <div key={i} className={`flex shrink-0 ${i < ribbon.length - 1 ? "border-r border-[#dcdcdc]" : ""}`}>
        {group.map((c) => (
          <button
            type="button"
            key={c.n}
            disabled={c.off}
            className={`flex flex-col items-center whitespace-nowrap pt-[3px] leading-[14px] ${c.w} ${c.off ? "text-[#b4b4b4]" : ""}`}
          >
            <Icon n={c.n} />
            <span className="mt-[2px]">
              {c.t.map((line) => (
                <span key={line} className="block">
                  {line}
                </span>
              ))}
            </span>
            {c.arrow && <Caret className={`mb-[4px] mt-auto ${c.off ? "text-[#999]" : "text-[#333]"}`} />}
          </button>
        ))}
      </div>
    ))}
    <button type="button" aria-label="リボンを折りたたむ" className="mb-[7px] ml-auto mr-[7px] mt-auto">
      <svg viewBox="0 0 9 6" className="h-[6px] w-[9px]" aria-hidden="true">
        <path d="M.5 5.200l4-4 4 4" fill="none" stroke="#333" strokeWidth="1.500" />
      </svg>
    </button>
  </div>
);

const ribbonTabs: [string, string][] = [
  ["基本ﾓﾃﾞﾘﾝｸﾞ ﾂｰﾙ", "w-[104px]"],
  ["ﾌｨｰﾁｬｰ", "w-[52px]"],
  ["ｽｹｯﾁ", "w-[36px]"],
  ["ﾒｯｼｭ ﾓﾃﾞﾙ", "w-[66px]"],
  ["評価", "w-[34px]"],
  ["Simulation", "w-[66px]"],
  ["解析の準備", "w-[69px]"],
];

const HudCaret = () => (
  <span className="flex w-[11px] justify-center">
    <Caret className="text-[#777]" />
  </span>
);

const TabStrip = () => (
  <div className="flex h-[22px] shrink-0 items-stretch bg-[#c4c8d4]">
    <div role="tablist" className="flex shrink-0">
      {ribbonTabs.map(([t, w], i) => (
        <button
          type="button"
          role="tab"
          aria-selected={i === 0}
          key={t}
          className={`whitespace-nowrap border-b text-center ${w} ${i === 0 ? "border-[#f7f7f7] bg-[#f7f7f7]" : "border-r border-[#b0b0b0] bg-[#d0d0d0]"}`}
        >
          {t}
        </button>
      ))}
    </div>
    <div className="ml-[177px] flex shrink-0 items-center">
      <IconButton n="normalTo" label="垂直" className="h-[22px] w-[22px] opacity-75" />
      <IconButton n="cursorDark" label="選択" className="h-[22px] w-[22px] border border-[#6a6c70] bg-[#86888d]" />
      <div className="flex items-center opacity-85">
        <IconButton n="pan" label="パン" className="w-[22px]" />
        <IconButton n="rotate" label="回転" className="w-[22px]" />
        <IconButton n="zoomFit" label="ウィンドウにフィット" className="w-[22px]" />
        <IconButton n="zoomArea" label="一部拡大" className="w-[22px]" />
        <IconButton n="viewSel" label="表示方向" className="w-[22px]" />
        <HudCaret />
        <IconButton n="style" label="表示スタイル" className="w-[22px]" />
        <HudCaret />
        <IconButton n="sectionView" label="断面表示" className="w-[22px]" />
        <IconButton n="eye" label="アイテムを表示" className="w-[22px]" />
        <HudCaret />
      </div>
    </div>
    <div className="ml-auto mr-[5px] flex items-center text-[#8b8e97]">
      {[
        ["paneL", "左に並べる"],
        ["paneR", "右に並べる"],
        ["min", "ドキュメントを最小化"],
        ["restore", "ドキュメントを元に戻す"],
        ["close", "ドキュメントを閉じる"],
      ].map(([n, label]) => (
        <IconButton key={n} n={n} label={label} className="w-[22px]" icon="size-[16px]" />
      ))}
    </div>
  </div>
);

const annotations = ["an1", "an2", "an3", "an4", "an5", "an6", "an7", "an8"];

type Node = { n: IconName; t: string; d?: number; open?: boolean };

const tree: Node[] = [
  { n: "bodyFolder", t: "ｿﾘｯﾄﾞ ﾎﾞﾃﾞｨ(1)", open: false },
  { n: "eqFolder", t: "関係式" },
  { n: "material", t: "材料 <指定なし>" },
  { n: "plane", t: "正面" },
  { n: "plane", t: "平面" },
  { n: "plane", t: "右側面" },
  { n: "origin", t: "原点" },
  { n: "boss", t: "ﾎﾞｽ - 押し出し1", open: true },
  { n: "sketch", t: "ｽｹｯﾁ1", d: 1 },
  { n: "boss", t: "ﾎﾞｽ - 押し出し3", open: true },
  { n: "sketch", t: "ｽｹｯﾁ2", d: 1 },
  { n: "cut", t: "ｶｯﾄ - 押し出し2", open: true },
  { n: "sketch", t: "ｽｹｯﾁ4", d: 1 },
  { n: "sketch", t: "ｽｹｯﾁ5" },
  { n: "cut", t: "ｶｯﾄ - 押し出し4", open: false },
  { n: "cut", t: "ｶｯﾄ - 押し出し8", open: true },
  { n: "sketchC", t: "ｽｹｯﾁ10", d: 1 },
  { n: "boss", t: "ﾎﾞｽ - 押し出し6", open: false },
  { n: "cut", t: "ｶｯﾄ - 押し出し9", open: false },
  { n: "cut", t: "ｶｯﾄ - 押し出し12", open: true },
  { n: "sketchC", t: "(-) ｽｹｯﾁ15", d: 1 },
  { n: "boss", t: "ﾎﾞｽ - 押し出し7", open: false },
  { n: "cut", t: "ｶｯﾄ - 押し出し13", open: false },
  { n: "cut", t: "ｶｯﾄ - 押し出し14", open: false },
  { n: "cut", t: "ｶｯﾄ - 押し出し17", open: false },
];

const FeaturePanel = () => (
  <aside className="relative z-10 flex w-[174px] shrink-0 flex-col border-l border-r border-[#cfcfcf] bg-[#f7f7f7]">
    <div className="flex h-[19px] shrink-0 items-center justify-center border-b border-[#e2e2e2]">
      <span className="size-[6px] rounded-full border border-[#999] bg-[#ccc]" />
    </div>
    <div className="flex h-[24px] shrink-0 items-end pl-px">
      {["part", "prop", "config", "target", "darkBall"].map((n, i) => (
        <IconButton
          key={n}
          n={n}
          label={n}
          className={`h-[21px] w-[29px] ${i === 0 ? "border-t border-[#cfcfcf] bg-[#f7f7f7]" : "border border-l-0 border-[#b8b8b8] bg-[#d0d0d0]"}`}
        />
      ))}
      <button type="button" aria-label="次のタブ" className="flex h-[21px] flex-1 items-center justify-center">
        <svg viewBox="0 0 8 12" className="ml-[4px] h-[12px] w-[8px]" aria-hidden="true">
          <path d="M1.500 1l5 5-5 5" fill="none" stroke="#555" strokeWidth="1.600" />
        </svg>
      </button>
    </div>
    <label className="mx-px flex h-[25px] shrink-0 items-center border border-[#d6d6d6] pl-[3px]">
      <Icon n="funnel" />
      <input aria-label="ツリーをフィルタ" className="ml-[4px] min-w-0 flex-1 bg-transparent outline-none" />
    </label>
    <ul className="flex h-[556px] shrink-0 flex-col text-[#333]">
      <li className="flex min-h-0 flex-1 items-center pl-[2px]">
        <Icon n="part" />
        <Icon n="cap" className="ml-[3px] size-[18px]" />
        <span className="ml-[2px]">指板</span>
      </li>
      {tree.map((r) => (
        <li key={r.t} className={`flex min-h-0 flex-1 items-center ${r.d ? "pl-[21px]" : ""}`}>
          <span className="flex w-[22px] shrink-0 justify-center pr-[3px]">
            {r.open !== undefined && (
              <button type="button" aria-label={`${r.t} を展開`}>
                <svg viewBox="0 0 6 6" className="size-[6px]" aria-hidden="true">
                  <path d={r.open ? "M0 1h6L3 5z" : "M1.500 0v6l3-3z"} fill="#555" />
                </svg>
              </button>
            )}
          </span>
          <Icon n={r.n} />
          <span className="ml-[3px] whitespace-nowrap">{r.t}</span>
        </li>
      ))}
    </ul>
    <div className="-mt-px h-[3px] shrink-0 bg-[#3a80b0]" />
    <button
      type="button"
      aria-label="パネルの表示切替"
      className="absolute left-full top-[301px] flex h-[38px] w-[9px] items-center justify-center border border-l-0 border-[#c9c9c9] bg-[#f7f7f7]"
    >
      <span className="size-[6px] rounded-full border border-[#999] bg-[#ccc]" />
    </button>
  </aside>
);

/* Fret slots on the fingerboard: top point, then bottom point. */
const frets: [number, number, number, number][] = [
  [281.7, 505.7, 359, 575.7],
  [297.7, 500.7, 374.7, 570.5],
  [315.3, 494.7, 390, 564.7],
  [334.7, 488.3, 407, 558.7],
  [355, 481.7, 424.7, 552],
  [376.3, 475, 443.7, 545],
  [398.7, 467.7, 463.7, 537.7],
  [422.7, 460, 485, 530],
  [448.3, 451.7, 507.7, 521.7],
  [475, 443.3, 531.3, 513.3],
  [503.7, 434.3, 556.7, 504],
  [534.3, 424.7, 583.3, 494.3],
  [566, 414.3, 611.7, 483.7],
  [600, 403.3, 641.7, 472.7],
  [636, 392, 673.7, 461],
  [673.7, 379.5, 707.3, 449],
  [714.3, 366.7, 743, 436],
  [757, 353, 780.7, 422],
  [802.3, 338.3, 821, 407.7],
  [850.3, 323.3, 863.7, 392.3],
  [901, 307, 908.7, 375.7],
  [954.7, 289.7, 956.3, 358.3],
  [1011.3, 271.7, 1007, 340],
  [1071.7, 252.3, 1060.7, 320.7],
  [1136, 231.7, 1117.7, 300.3],
];

const markers: [number, number][] = [
  [307.3, 519], [349.3, 557.3], [380.7, 520.3], [421, 506.3], [466.3, 491], [517, 473.7],
  [593.3, 425], [617, 462.3], [710, 408], [790.3, 380.3], [881, 349.7], [982.3, 315.3],
];

const Viewport = () => (
  <svg viewBox="199 150 1065 661" className="size-full" role="img" aria-label="指板モデル">
    <defs>
      <linearGradient id="board" gradientUnits="userSpaceOnUse" x1="690" y1="370" x2="715" y2="450">
        <stop offset="0" stopColor="#b4b4b4" />
        <stop offset=".4" stopColor="#b7b7b7" />
        <stop offset="1" stopColor="#c0c0be" />
      </linearGradient>
    </defs>
    <path d="M267.300 510L1145 228.700 1126.700 297.300 346.300 580.700z" fill="url(#board)" stroke="#26262c" strokeWidth="1" />
    {frets.map(([a, b, c, d]) => (
      <path key={a} d={`M${a} ${b}L${c} ${d}`} stroke="#0e0e0e" strokeWidth="1.500" />
    ))}
    {markers.map(([x, y]) => (
      <circle key={x} cx={x} cy={y} r="3.900" fill="none" stroke="#2e2e2e" strokeWidth="1" />
    ))}
    <g strokeLinejoin="round">
      <path d="M243 764.500L258 759.500" stroke="#1e6a2a" strokeWidth="4" />
      <path d="M243 764L258 759" stroke="#5cb868" strokeWidth="1.200" />
      <path d="M255.500 755.500L266 756.500 258 763z" fill="#1d7a2c" stroke="#114a1a" strokeWidth=".6" />
      <path d="M241 768L245 783" stroke="#a01c1c" strokeWidth="4" />
      <path d="M241 768L245 783" stroke="#ea6a62" strokeWidth="1.200" />
      <path d="M240.500 785.500L248.500 783.500 247.500 793.500z" fill="#c62222" stroke="#7a1010" strokeWidth=".6" />
      <circle cx="240.500" cy="765.500" r="4.500" fill="#15159c" stroke="#0a0a5c" strokeWidth=".6" />
    </g>
    <text x="264" y="757" fontSize="11" fill="#2a8a3a">Y</text>
    <text x="244" y="801" fontSize="11" fill="#d83030">X</text>
  </svg>
);

const TaskTabs = () => (
  <div className="absolute right-0 top-[37px] flex w-[27px] flex-col border border-[#aaaeb8]">
    {["compass", "books", "palette", "ball", "chat", "importer"].map((n) => (
      <IconButton
        key={n}
        n={n}
        label={`作業タブ ${n}`}
        className={`h-[23px] border-b border-[#aaaeb8] last:border-b-0 ${n === "books" ? "bg-[#f7f7f7]" : "bg-[#d3d3d3]"}`}
      />
    ))}
  </div>
);

const TaskPane = () => (
  <aside className="flex w-[136px] shrink-0 flex-col overflow-hidden bg-[#f7f7f7]">
    <div className="flex h-[22px] shrink-0 items-center border-b-2 border-[#85878b] bg-[#abadb1]">
      <svg viewBox="0 0 10 8" className="ml-[9px] h-[8px] w-[10px] shrink-0" aria-hidden="true">
        <path d="M4.500.5L1 4l3.500 3.500M9 .5L5.500 4 9 7.500" fill="none" stroke="#222" strokeWidth="1.200" />
      </svg>
      <h2 className="ml-[7px] shrink-0 whitespace-nowrap font-bold text-[#222]">ﾃﾞｻﾞｲﾝ ﾗｲﾌﾞﾗﾘ</h2>
      <IconButton n="gearWhite" label="ライブラリ オプション" className="ml-px" icon="size-[17px]" />
      <IconButton n="pin" label="パネルを固定" className="ml-[3px] text-[#222]" icon="size-[15px]" />
    </div>
    <div className="ml-[5px] flex h-[27px] shrink-0 items-center border-b border-[#cfcfcf] pl-[3px]">
      <IconButton n="back" label="戻る" />
      <IconButton n="fwd" label="進む" className="ml-[5px]" />
      <Caret className="mr-[6px] text-[#666]" />
      <IconButton n="booksAdd" label="ライブラリに追加" />
      <IconButton n="booksNew" label="ファイルの場所を追加" className="ml-[5px]" />
      <IconButton n="folderNew" label="新規フォルダ" className="ml-[5px]" />
      <IconButton n="refresh" label="更新" className="ml-px" />
    </div>
    <label className="ml-[5px] mt-[3px] flex h-[23px] shrink-0 items-center border border-r-0 border-[#dcdcdc] bg-white pl-[3px]">
      <Icon n="bolt" className="mt-[3px] size-[14px]" />
      <input
        aria-label="Toolbox 内を検索"
        placeholder="Toolbox 内を検索"
        className="mb-[4px] ml-[2px] min-w-0 flex-1 bg-transparent text-[10px] outline-none placeholder:text-[#777]"
      />
    </label>
    <div className="ml-[5px] mt-[10px] flex h-[26px] shrink-0 items-center">
      <svg viewBox="0 0 5 8" className="ml-[9px] h-[8px] w-[5px] shrink-0" aria-hidden="true">
        <path d="M.8.8L4 4 .8 7.200" fill="none" stroke="#555" strokeWidth="1.200" />
      </svg>
      <Icon n="books" className="ml-[9px] size-[16px]" />
      <a href="#design-library" className="ml-[4px] whitespace-nowrap text-[12px] text-[#111]">
        Design Library
      </a>
    </div>
    <div className="ml-[5px] h-[12px] shrink-0 border-b-2 border-[#8f97a8] bg-[#f3f3f3] pl-[16px]">
      <div className="h-[2px] w-[49px] bg-[#888]" />
    </div>
  </aside>
);

const StatusBar = () => (
  <footer className="flex h-[17px] shrink-0 items-center border-t border-[#bcbcbc] bg-[#f7f7f7] pt-[2px] text-[#222]">
    <p className="whitespace-nowrap">SOLIDWORKS Design Premium for Students 2026 SP1.1 - 学究的使用のみ</p>
    <div className="ml-auto flex shrink-0 items-center whitespace-nowrap">
      <span className="w-[83px]">編集中： Part</span>
      <Icon n="alert" className="size-[15px]" />
      <span className="ml-[29px] w-[126px]">簡略化されたｲﾝﾀﾌｪｰｽ</span>
      <span className="w-[54px]">MMGS</span>
      <span className="w-[16px]">·</span>
      <Icon n="tag" className="size-[15px]" />
      <Icon n="notice" className="ml-[5px] mr-[1px] size-[15px]" />
    </div>
  </footer>
);

export default function App() {
  return (
    <div className="flex h-screen flex-col overflow-hidden bg-[#f7f7f7] font-['Noto_Sans','Noto_Sans_CJK_JP',sans-serif] text-[11px] text-[#1c1c1c]">
      <TitleBar />
      <ToolBar />
      <Ribbon />
      <main className="flex min-h-0 flex-1">
        <section className="flex min-w-0 flex-1 flex-col">
          <TabStrip />
          <div className="flex min-h-0 flex-1">
            <div className="w-[25px] shrink-0 bg-[#f7f7f7]">
              <div className="flex h-[189px] flex-col items-center justify-between border-b border-[#c9c9c9] pb-[5px] pt-[9px]">
                {annotations.map((n) => (
                  <IconButton key={n} n={n} label={`アノテート ${n}`} />
                ))}
              </div>
            </div>
            <FeaturePanel />
            <div className="relative min-w-0 flex-1 bg-[#c4c8d4]">
              <Viewport />
              <TaskTabs />
            </div>
          </div>
        </section>
        <TaskPane />
      </main>
      <StatusBar />
    </div>
  );
}
